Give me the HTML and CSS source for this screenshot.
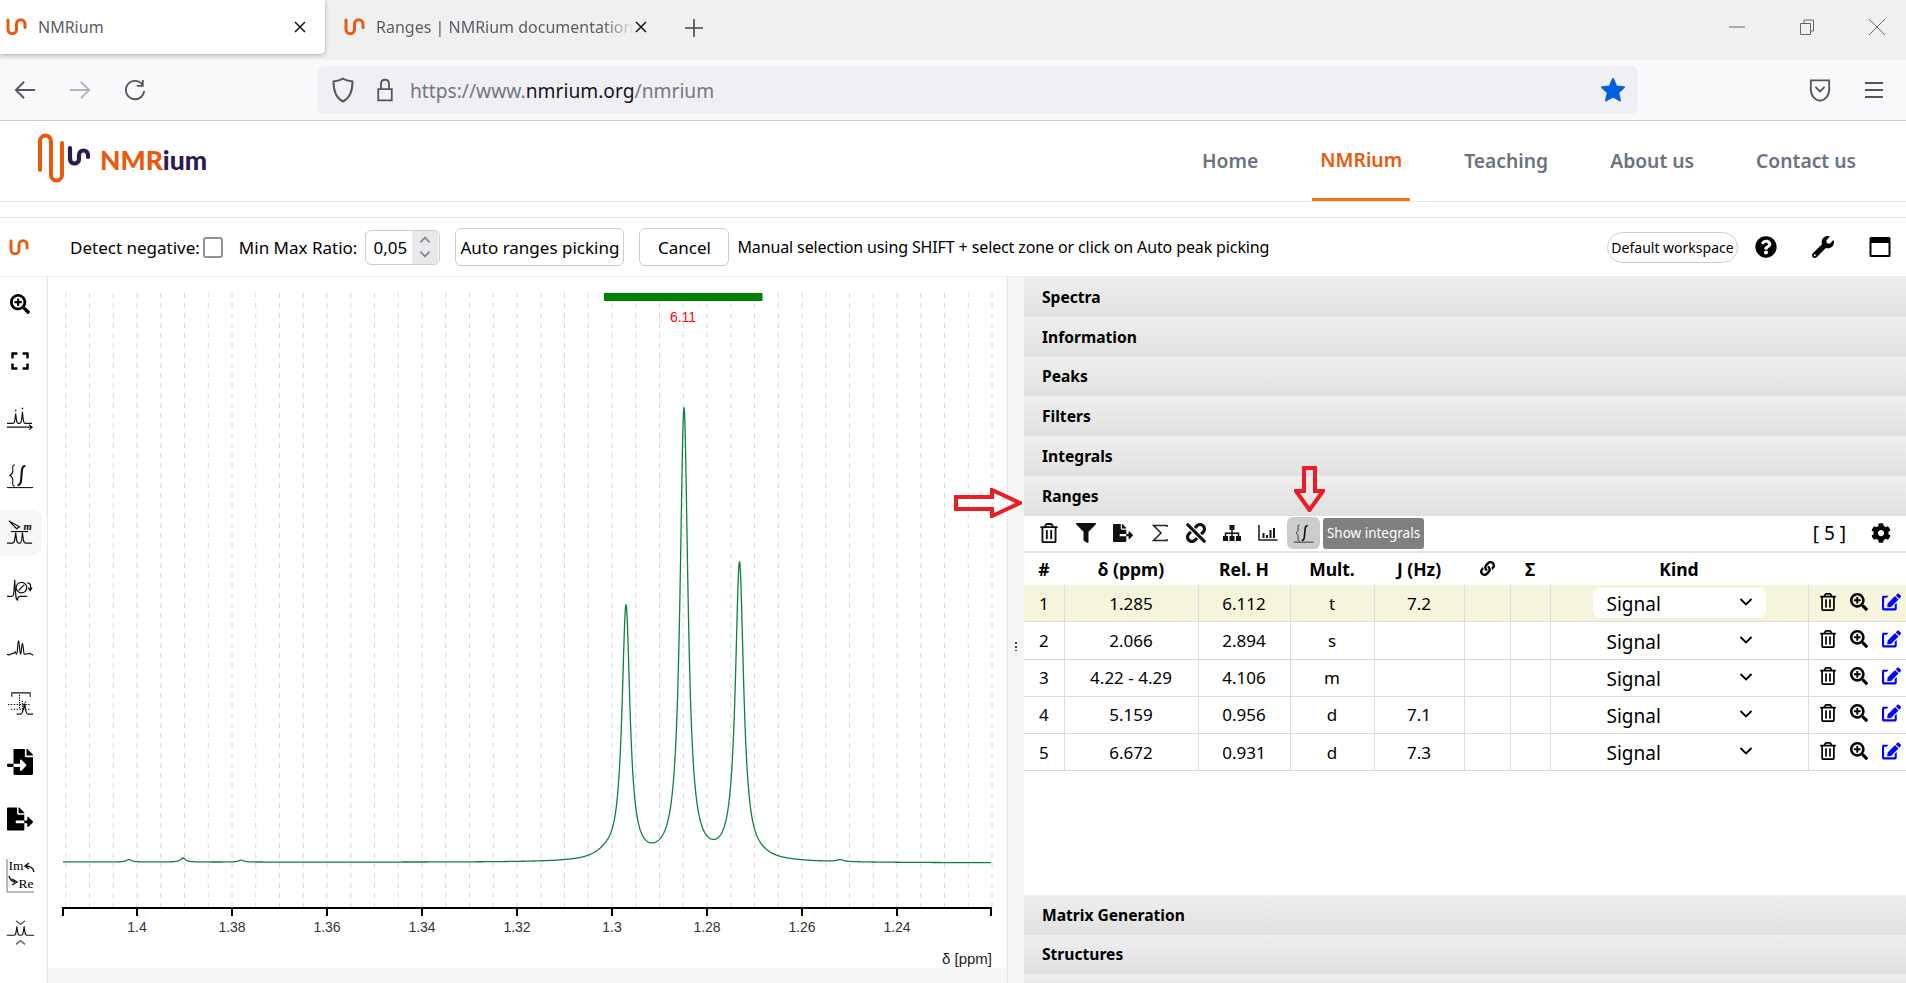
FILE: index.html
```html
<!DOCTYPE html>
<html lang="en">
<head>
<meta charset="utf-8">
<title>NMRium</title>
<link rel="stylesheet" href="styles.css">
</head>
<body>
<svg class="sprite" xmlns="http://www.w3.org/2000/svg">
  <symbol id="i-fav" viewBox="0 0 22 18"><path d="M2 2V11.500a4.250 4.250 0 0 0 8.500 0V6a4.250 4.250 0 0 1 8.500 0V9.500" fill="none" stroke="#ea5a0c" stroke-width="3" stroke-linecap="round"/></symbol>
  <symbol id="i-close" viewBox="0 0 14 14"><path d="M2 2L12 12M12 2L2 12" fill="none" stroke="currentColor" stroke-width="1.500"/></symbol>
  <symbol id="i-zoom" viewBox="0 0 512 512"><path d="M304 192v32c0 6.600-5.400 12-12 12h-56v56c0 6.600-5.400 12-12 12h-32c-6.600 0-12-5.400-12-12v-56h-56c-6.600 0-12-5.400-12-12v-32c0-6.600 5.400-12 12-12h56v-56c0-6.600 5.400-12 12-12h32c6.600 0 12 5.400 12 12v56h56c6.600 0 12 5.400 12 12zm201 284.700L476.700 505c-9.400 9.400-24.600 9.400-33.900 0L343 405.300c-4.500-4.500-7-10.600-7-17V372c-35.300 27.600-79.700 44-128 44C93.100 416 0 322.900 0 208S93.100 0 208 0s208 93.100 208 208c0 48.300-16.400 92.700-44 128h16.300c6.400 0 12.500 2.500 17 7l99.700 99.700c9.300 9.400 9.300 24.600 0 34zM344 208c0-75.200-60.800-136-136-136S72 132.800 72 208s60.800 136 136 136 136-60.800 136-136z"/></symbol>
  <symbol id="i-expand" viewBox="0 0 448 512"><path d="M0 180V56c0-13.300 10.700-24 24-24h124c6.600 0 12 5.400 12 12v40c0 6.600-5.400 12-12 12H64v84c0 6.600-5.400 12-12 12H12c-6.600 0-12-5.400-12-12zM288 44v40c0 6.600 5.400 12 12 12h84v84c0 6.600 5.400 12 12 12h40c6.600 0 12-5.400 12-12V56c0-13.300-10.700-24-24-24H300c-6.600 0-12 5.400-12 12zm148 276h-40c-6.600 0-12 5.400-12 12v84h-84c-6.600 0-12 5.400-12 12v40c0 6.600 5.400 12 12 12h124c13.300 0 24-10.700 24-24V332c0-6.600-5.400-12-12-12zM160 468v-40c0-6.600-5.400-12-12-12H64v-84c0-6.600-5.400-12-12-12H12c-6.600 0-12 5.400-12 12v124c0 13.300 10.700 24 24 24h124c6.600 0 12-5.400 12-12z"/></symbol>
  <symbol id="i-trash" viewBox="0 0 448 512"><path d="M268 416h24a12 12 0 0 0 12-12V188a12 12 0 0 0-12-12h-24a12 12 0 0 0-12 12v216a12 12 0 0 0 12 12zM432 80h-82.410l-34-56.700A48 48 0 0 0 274.410 0H173.590a48 48 0 0 0-41.160 23.300L98.410 80H16A16 16 0 0 0 0 96v16a16 16 0 0 0 16 16h16v336a48 48 0 0 0 48 48h288a48 48 0 0 0 48-48V128h16a16 16 0 0 0 16-16V96a16 16 0 0 0-16-16zM171.840 50.910A6 6 0 0 1 177 48h94a6 6 0 0 1 5.150 2.910L293.610 80H154.390zM368 464H80V128h288zm-212-48h24a12 12 0 0 0 12-12V188a12 12 0 0 0-12-12h-24a12 12 0 0 0-12 12v216a12 12 0 0 0 12 12z"/></symbol>
  <symbol id="i-filter" viewBox="0 0 512 512"><path d="M487.976 0H24.028C2.710 0-8.047 25.866 7.058 40.971L192 225.941V432c0 7.831 3.821 15.170 10.237 19.662l80 55.980C298.020 518.690 320 507.493 320 487.980V225.941l184.947-184.970C520.021 25.896 509.338 0 487.976 0z"/></symbol>
  <symbol id="i-export" viewBox="0 0 576 512"><path d="M384 121.900c0-6.300-2.500-12.400-7-16.900L279.100 7c-4.500-4.500-10.600-7-17-7H256v128h128zM571 308l-95.700-96.400c-10.100-10.100-27.400-3-27.400 11.300V288h-64v64h64v65.200c0 14.300 17.300 21.400 27.400 11.300L571 332c6.600-6.600 6.600-17.400 0-24zm-379 28v-32c0-8.800 7.200-16 16-16h176V160H248c-13.200 0-24-10.800-24-24V0H24C10.700 0 0 10.700 0 24v464c0 13.300 10.700 24 24 24h336c13.300 0 24-10.700 24-24V352H208c-8.800 0-16-7.200-16-16z"/></symbol>
  <symbol id="i-import" viewBox="0 0 512 512"><path d="M16 288c-8.800 0-16 7.200-16 16v32c0 8.800 7.200 16 16 16h112v-64zm489-183L407.100 7c-4.500-4.500-10.600-7-17-7H384v128h128v-6.100c0-6.300-2.500-12.400-7-16.900zm-153 31V0H152c-13.300 0-24 10.700-24 24v264h128v-65.200c0-14.300 17.300-21.400 27.400-11.300L379 308c6.600 6.700 6.600 17.400 0 24l-95.700 96.400c-10.100 10.100-27.400 3-27.400-11.300V352H128v136c0 13.300 10.700 24 24 24h336c13.300 0 24-10.700 24-24V160H376c-13.200 0-24-10.800-24-24z"/></symbol>
  <symbol id="i-unlink" viewBox="0 0 512 512"><path d="M304.083 405.907c4.686 4.686 4.686 12.284 0 16.971l-44.674 44.674c-59.263 59.262-155.693 59.266-214.961 0-59.264-59.265-59.264-155.696 0-214.960l44.675-44.675c4.686-4.686 12.284-4.686 16.971 0l39.598 39.598c4.686 4.686 4.686 12.284 0 16.971l-44.675 44.674c-28.072 28.073-28.072 73.750 0 101.823 28.072 28.072 73.750 28.073 101.824 0l44.674-44.674c4.686-4.686 12.284-4.686 16.971 0l39.597 39.598zm-56.568-260.216c4.686 4.686 12.284 4.686 16.971 0l44.674-44.674c28.072-28.075 73.750-28.073 101.824 0 28.072 28.073 28.072 73.750 0 101.823l-44.675 44.674c-4.686 4.686-4.686 12.284 0 16.971l39.598 39.598c4.686 4.686 12.284 4.686 16.971 0l44.675-44.675c59.265-59.265 59.265-155.695 0-214.960-59.266-59.264-155.695-59.264-214.961 0l-44.674 44.674c-4.686 4.686-4.686 12.284 0 16.971l39.597 39.598zm234.828 359.280l22.627-22.627c9.373-9.373 9.373-24.569 0-33.941L63.598 7.029c-9.373-9.373-24.569-9.373-33.941 0L7.029 29.657c-9.373 9.373-9.373 24.569 0 33.941l441.373 441.373c9.373 9.372 24.569 9.372 33.941 0z"/></symbol>
  <symbol id="i-link" viewBox="0 0 512 512"><path d="M326.612 185.391c59.747 59.809 58.927 155.698.36 214.590-.11.12-.24.25-.36.37l-67.2 67.2c-59.270 59.270-155.699 59.262-214.960 0-59.270-59.260-59.270-155.700 0-214.960l37.106-37.106c9.840-9.840 26.786-3.300 27.294 10.606.648 17.722 3.826 35.527 9.690 52.721 1.986 5.822.567 12.262-3.783 16.612l-13.087 13.087c-28.026 28.026-28.905 73.660-1.155 101.960 28.024 28.579 74.086 28.749 102.325.51l67.2-67.190c28.191-28.191 28.073-73.757 0-101.830-3.701-3.694-7.429-6.564-10.341-8.569a16.037 16.037 0 0 1-6.947-12.606c-.396-10.567 3.348-21.456 11.698-29.806l21.054-21.055c5.521-5.521 14.182-6.199 20.584-1.731a152.482 152.482 0 0 1 20.522 17.197zM467.547 44.449c-59.261-59.262-155.690-59.270-214.960 0l-67.2 67.2c-.12.12-.25.25-.36.37-58.566 58.892-59.387 154.781.36 214.590a152.454 152.454 0 0 0 20.521 17.196c6.402 4.468 15.064 3.789 20.584-1.731l21.054-21.055c8.350-8.350 12.094-19.239 11.698-29.806a16.037 16.037 0 0 0-6.947-12.606c-2.912-2.005-6.640-4.875-10.341-8.569-28.073-28.073-28.191-73.639 0-101.830l67.2-67.190c28.239-28.239 74.300-28.069 102.325.51 27.750 28.300 26.872 73.934-1.155 101.960l-13.087 13.087c-4.350 4.350-5.769 10.790-3.783 16.612 5.864 17.194 9.042 34.999 9.690 52.721.509 13.906 17.454 20.446 27.294 10.606l37.106-37.106c59.271-59.259 59.271-155.699.001-214.959z"/></symbol>
  <symbol id="i-edit" viewBox="0 0 576 512"><path d="M402.600 83.200l90.200 90.200c3.800 3.800 3.800 10 0 13.800L274.400 405.600l-92.800 10.300c-12.400 1.400-22.900-9.100-21.500-21.500l10.300-92.800L388.800 83.200c3.800-3.800 10-3.800 13.800 0zm162-22.900l-48.800-48.800c-15.200-15.200-39.900-15.200-55.200 0l-35.400 35.400c-3.800 3.800-3.800 10 0 13.800l90.200 90.200c3.800 3.800 10 3.800 13.800 0l35.400-35.400c15.200-15.300 15.200-40 0-55.200zM384 346.200V448H64V128h73.100c3.200 0 6.200-1.300 8.500-3.500l40-40c7.600-7.600 2.200-20.500-8.500-20.500H48C21.500 64 0 85.500 0 112v352c0 26.500 21.500 48 48 48h352c26.500 0 48-21.500 48-48V306.200c0-10.700-12.900-16-20.500-8.500l-40 40c-2.200 2.300-3.500 5.300-3.500 8.500z"/></symbol>
  <symbol id="i-integral" viewBox="0 0 30 30"><g fill="none" stroke="#111"><path d="M9 4C6 4 7 7 7 10C7 13 6 14 4 15C6 16 7 17 7 20C7 23 6 26 9 26" stroke-width="1.100"/><path d="M12 25C15 25 15.500 23 16 15C16.500 7 17 5 20 5" stroke-width="2.200"/><path d="M1 27.500H28" stroke-width="1.100"/></g></symbol>
  <symbol id="i-chev" viewBox="0 0 14 10"><path d="M1.500 2L7 7.500L12.500 2" fill="none" stroke="currentColor" stroke-width="1.800"/></symbol>
</svg>

<header class="chrome">
  <div class="tabstrip">
    <div class="tab tab-active">
      <svg class="fav"><use href="#i-fav"/></svg>
      <span class="tab-title">NMRium</span>
      <svg class="tab-close"><use href="#i-close"/></svg>
    </div>
    <div class="tab tab-other">
      <svg class="fav"><use href="#i-fav"/></svg>
      <span class="tab-title tab-fade">Ranges | NMRium documentation</span>
      <svg class="tab-close"><use href="#i-close"/></svg>
    </div>
    <svg class="newtab" viewBox="0 0 20 20"><path d="M10 1V19M1 10H19" stroke="#444" stroke-width="1.600"/></svg>
    <div class="winctl">
      <svg viewBox="0 0 16 16"><path d="M0 8H16" stroke="#666" stroke-width="1"/></svg>
      <svg viewBox="0 0 16 16"><path d="M1.500 4.500H11.500V15.500H1.500ZM5 4.500V1H14.500V12H11.500" fill="none" stroke="#666" stroke-width="1"/></svg>
      <svg viewBox="0 0 16 16"><path d="M0 0L16 16M16 0L0 16" stroke="#666" stroke-width="1"/></svg>
    </div>
  </div>
  <div class="navbar">
    <svg class="nav-ico nav-back" viewBox="0 0 24 24"><path d="M23 12H2M11 3L2 12L11 21" fill="none" stroke="#55555f" stroke-width="2"/></svg>
    <svg class="nav-ico nav-fwd" viewBox="0 0 24 24"><path d="M1 12H22M13 3L22 12L13 21" fill="none" stroke="#b4b4ba" stroke-width="2"/></svg>
    <svg class="nav-ico nav-reload" viewBox="0 0 24 24"><path d="M20 6A10 10 0 1 0 22 13M20.500 1V7.500H14" fill="none" stroke="#55555f" stroke-width="2"/></svg>
    <div class="urlbar">
      <svg class="url-shield" viewBox="0 0 22 26"><path d="M11 1.500C14 3.500 17 4 20.500 4.500C20.500 14 18 21 11 24.500C4 21 1.500 14 1.500 4.500C5 4 8 3.500 11 1.500Z" fill="none" stroke="#55555f" stroke-width="2"/></svg>
      <svg class="url-lock" viewBox="0 0 20 26"><path d="M2.500 12H17.500V24.500H2.500ZM5.500 12V6.500C5.500 0 14.500 0 14.500 6.500V12" fill="none" stroke="#55555f" stroke-width="2"/></svg>
      <span class="url-text">https://www.<b class="url-domain">nmrium.org</b>/nmrium</span>
      <svg class="url-star" viewBox="0 0 26 26"><path d="M13 2L16.200 9.500L24 10.300L18.200 15.600L20 23.500L13 19.300L6 23.500L7.800 15.600L2 10.300L9.800 9.500Z" fill="#0060df" stroke="#0060df" stroke-width="2" stroke-linejoin="round"/></svg>
    </div>
    <svg class="nav-ico nav-pocket" viewBox="0 0 24 26"><path d="M2 2H22V12C22 19 17 24 12 24C7 24 2 19 2 12ZM7 9L12 14L17 9" fill="none" stroke="#55555f" stroke-width="2"/></svg>
    <svg class="nav-ico nav-menu" viewBox="0 0 20 20"><path d="M1 3H19M1 10H19M1 17H19" stroke="#55555f" stroke-width="2"/></svg>
  </div>
</header>

<div class="sitehead">
  <div class="logo">
    <svg class="logo-mark" viewBox="0 0 56 50">
      <path d="M2 37V8a5.500 5.500 0 0 1 11 0V42a5.500 5.500 0 0 0 11 0V10" fill="none" stroke="#ea5a0c" stroke-width="4" stroke-linecap="round"/>
      <path d="M32 15V26a4.500 4.500 0 0 0 9 0V22a4.500 4.500 0 0 1 9 0V24" fill="none" stroke="#2d1b4e" stroke-width="4.200" stroke-linecap="round"/>
    </svg>
    <span class="logo-text"><span class="logo-nmr">NMR</span>ium</span>
  </div>
  <nav class="sitenav">
    <a class="navlink">Home</a>
    <a class="navlink navlink-on">NMRium</a>
    <a class="navlink">Teaching</a>
    <a class="navlink">About us</a>
    <a class="navlink">Contact us</a>
  </nav>
</div>
<div class="headgap"></div>

<div class="toolbar">
  <svg class="tb-logo"><use href="#i-fav"/></svg>
  <label class="tb-label tb-detect">Detect negative:</label>
  <input class="tb-check" type="checkbox">
  <span class="tb-label tb-ratio">Min Max Ratio:</span>
  <div class="spin"><span class="spin-val">0,05</span>
    <span class="spin-btn"><svg viewBox="0 0 12 24"><path d="M2 8L6 4L10 8M2 16L6 20L10 16" fill="none" stroke="#888" stroke-width="1.600"/></svg></span>
  </div>
  <button class="tb-btn tb-auto">Auto ranges picking</button>
  <button class="tb-btn tb-cancel">Cancel</button>
  <span class="tb-label tb-hint">Manual selection using SHIFT + select zone or click on Auto peak picking</span>
  <button class="tb-workspace">Default workspace</button>
  <svg class="tb-ico tb-help" viewBox="0 0 512 512"><path d="M504 256c0 136.997-111.043 248-248 248S8 392.997 8 256C8 119.083 119.043 8 256 8s248 111.083 248 248zM262.655 90c-54.497 0-89.255 22.957-116.549 63.758-3.536 5.286-2.353 12.415 2.715 16.258l34.699 26.310c5.205 3.947 12.621 3.008 16.665-2.122 17.864-22.658 30.113-35.797 57.303-35.797 20.429 0 45.698 13.148 45.698 32.958 0 14.976-12.363 22.667-32.534 33.976C247.128 238.528 216 254.941 216 296v4c0 6.627 5.373 12 12 12h56c6.627 0 12-5.373 12-12v-1.333c0-28.462 83.186-29.647 83.186-106.667 0-58.002-60.165-102-116.531-102zM256 338c-25.365 0-46 20.635-46 46 0 25.364 20.635 46 46 46s46-20.636 46-46c0-25.365-20.635-46-46-46z"/></svg>
  <svg class="tb-ico tb-wrench" viewBox="0 0 512 512"><path d="M507.730 109.100c-2.240-9.030-13.540-12.090-20.120-5.510l-74.360 74.360-67.880-11.310-11.310-67.880 74.360-74.360c6.620-6.620 3.430-17.900-5.660-20.160-47.380-11.740-99.550.91-136.580 37.930-39.640 39.640-50.550 97.100-34.050 147.200L18.740 402.760c-24.990 24.990-24.990 65.510 0 90.500 24.990 24.990 65.510 24.990 90.500 0l213.210-213.210c50.120 16.710 107.470 5.680 147.370-34.220 37.070-37.070 49.700-89.320 37.910-136.730zM64 472c-13.250 0-24-10.750-24-24 0-13.260 10.750-24 24-24s24 10.740 24 24c0 13.250-10.750 24-24 24z"/></svg>
  <svg class="tb-ico tb-window" viewBox="0 0 22 22"><path d="M2 1H20A1.500 1.500 0 0 1 21.500 2.500V19.500A1.500 1.500 0 0 1 20 21H2A1.500 1.500 0 0 1 .5 19.500V2.500A1.500 1.500 0 0 1 2 1ZM2.500 7V19H19.500V7Z" fill-rule="evenodd"/></svg>
</div>

<main class="workspace">
  <aside class="sidebar">
    <div class="sb-item"><svg class="sb-fa"><use href="#i-zoom"/></svg></div>
    <div class="sb-item"><svg class="sb-fa"><use href="#i-expand"/></svg></div>
    <div class="sb-item"><svg class="sb-ico" viewBox="0 0 30 30"><g fill="none" stroke="#111" stroke-width="1.200"><path d="M1 20H7C9 20 9 18 10 10C11 18 11 20 12.500 20H14C16 20 16 18 17 8C18 18 18 20 20 20H27"/><path d="M10 6V7.500M17 4V5.500" stroke-width="1.500"/><path d="M1 24H27M24 21.500L27 24L24 26.500"/></g></svg></div>
    <div class="sb-item"><svg class="sb-ico"><use href="#i-integral"/></svg></div>
    <div class="sb-item sb-on"><svg class="sb-ico" viewBox="0 0 30 30"><g fill="none" stroke="#111" stroke-width="1.200"><path d="M1 25H7C9 25 9 22 10 14C11 22 11 25 13 25H14.500C16 25 16.500 22 17 14C18 22 18 25 20 25H27"/><path d="M5 13H23"/><path d="M3 2L14 8L11 10Z" fill="none"/></g><text class="sb-m" x="18" y="11">m</text></svg></div>
    <div class="sb-item"><svg class="sb-ico" viewBox="0 0 30 30"><g fill="none" stroke="#111" stroke-width="1.200"><path d="M1 21H6C8 21 8 20 9 4C10 20 10 25 12 25C12 22 13 21 15 21H22"/><circle cx="16" cy="12" r="5.500" stroke-width="1.300"/><path d="M13 15L19 9"/><path d="M22 7C26 7 26 11 25 14M23 12L25 15L27 12" stroke-width="1.300"/></g></svg></div>
    <div class="sb-item"><svg class="sb-ico" viewBox="0 0 30 30"><path d="M1 22C4 24 5 21 7 21C8 21 8 22 9 20C10 18 10 22 11 22C12 22 12 8 13 8C14 8 14 22 15 22C16 22 16 11 17 11C18 11 18 22 19 22C21 22 23 21 25 21C26 22 27 22 28 23" fill="none" stroke="#111" stroke-width="1.200"/></svg></div>
    <div class="sb-item"><svg class="sb-ico" viewBox="0 0 30 30"><g fill="none" stroke="#111" stroke-width="1.100"><path d="M6 7V3H25V7"/><path d="M2 15H26M5 20H26" stroke-dasharray="1.500 1.500"/><path d="M11 25H15C17 25 18 22 19 14C20 22 21 25 23 25H28" stroke-width="1.300"/><path d="M14 5V20M17 11V22M20 12V22" stroke-dasharray="1.500 1"/></g></svg></div>
    <div class="sb-item"><svg class="sb-fa sb-file"><use href="#i-import"/></svg></div>
    <div class="sb-item"><svg class="sb-fa sb-file"><use href="#i-export"/></svg></div>
    <div class="sb-item"><svg class="sb-imre" viewBox="0 0 29 35"><path d="M1 1V34H28" fill="none" stroke="#777" stroke-width="1"/><text class="sb-serif" x="2.500" y="12">Im</text><text class="sb-serif" x="12.500" y="30">Re</text><path d="M28 14C27 9 24 8 20 8M23 5L19 8L23 11M3 18C4 22 7 24 9 24M6 21L11 24L6 27" fill="none" stroke="#111" stroke-width="1.400"/></svg></div>
    <div class="sb-item"><svg class="sb-ico" viewBox="0 0 32 32"><path d="M1 18H9C11 18 11 16 12 8C13 16 13 18 16 18C19 18 19 16 20 8C21 16 21 18 23 18H31" fill="none" stroke="#111" stroke-width="1.200"/><path d="M11 2L16 6L21 2M11 28L16 24L21 28" fill="none" stroke="#666" stroke-width="1.600"/></svg></div>
  </aside>

  <section class="plot">
    <svg class="chart" id="chart" viewBox="48 276 959 691" width="959" height="691">
      <g id="grid" class="grid"></g>
      <rect class="range-bar" x="604" y="292" width="158.500" height="8"/>
      <text class="range-label" x="683" y="321">6.11</text>
      <path id="spectrum" class="spectrum"/>
      <path class="axis" d="M63 915V907H991V915M137 907V915M232 907V915M327 907V915M422 907V915M517 907V915M612 907V915M707 907V915M802 907V915M897 907V915"/>
      <text class="tick" x="137" y="931">1.4</text>
      <text class="tick" x="232" y="931">1.38</text>
      <text class="tick" x="327" y="931">1.36</text>
      <text class="tick" x="422" y="931">1.34</text>
      <text class="tick" x="517" y="931">1.32</text>
      <text class="tick" x="612" y="931">1.3</text>
      <text class="tick" x="707" y="931">1.28</text>
      <text class="tick" x="802" y="931">1.26</text>
      <text class="tick" x="897" y="931">1.24</text>
      <text class="axis-title" x="992" y="963">δ [ppm]</text>
    </svg>
  </section>

  <div class="splitter"><span class="grip"></span></div>

  <section class="panels">
    <div class="acc">Spectra</div>
    <div class="acc">Information</div>
    <div class="acc">Peaks</div>
    <div class="acc">Filters</div>
    <div class="acc">Integrals</div>
    <div class="acc">Ranges</div>
    <div class="ranges">
      <div class="rg-tools">
        <svg class="rg-ico"><use href="#i-trash"/></svg>
        <svg class="rg-ico"><use href="#i-filter"/></svg>
        <svg class="rg-ico"><use href="#i-export"/></svg>
        <svg class="rg-ico" viewBox="0 0 20 20"><path d="M17 4V2.500H3.500L11 10L3.500 17.500H17V16" fill="none" stroke="#222" stroke-width="1.500"/></svg>
        <svg class="rg-ico"><use href="#i-unlink"/></svg>
        <svg class="rg-ico" viewBox="0 0 20 20"><path d="M7.500 2H12.500V7H7.500ZM1 13H6V18H1ZM7.500 13H12.500V18H7.500ZM14 13H19V18H14ZM9.250 7H10.750V9.500H17.250V13H15.750V11H10.750V13H9.250V11H4.250V13H2.750V9.500H9.250Z"/></svg>
        <svg class="rg-ico" viewBox="0 0 20 20"><path d="M1 2V17H19.500" fill="none" stroke="#222" stroke-width="1.600"/><path d="M4.500 10H6.500V15H4.500ZM8 12H10V15H8ZM11.500 7H13.500V15H11.500ZM15 5H17V15H15Z"/></svg>
        <span class="rg-toggle"><svg class="rg-int"><use href="#i-integral"/></svg></span>
        <span class="tooltip">Show integrals</span>
        <span class="rg-count">[ 5 ]</span>
        <svg class="rg-cog" viewBox="0 0 512 512"><path d="M487.400 315.700l-42.600-24.600c4.300-23.200 4.300-47 0-70.200l42.600-24.600c4.900-2.800 7.100-8.600 5.500-14-11.100-35.600-30-67.800-54.700-94.600-3.800-4.100-10-5.100-14.800-2.300L380.800 110c-17.900-15.400-38.500-27.300-60.800-35.100V25.800c0-5.600-3.900-10.500-9.400-11.700-36.700-8.200-74.300-7.800-109.200 0-5.500 1.200-9.400 6.100-9.400 11.700V75c-22.200 7.900-42.800 19.800-60.800 35.100L88.700 85.500c-4.900-2.800-11-1.900-14.800 2.300-24.700 26.700-43.600 58.900-54.700 94.600-1.700 5.400.6 11.200 5.500 14L67.300 221c-4.300 23.200-4.300 47 0 70.200l-42.600 24.600c-4.900 2.800-7.100 8.600-5.500 14 11.100 35.600 30 67.800 54.700 94.600 3.800 4.100 10 5.100 14.800 2.300l42.600-24.600c17.900 15.400 38.500 27.300 60.800 35.100v49.200c0 5.600 3.900 10.500 9.400 11.700 36.700 8.200 74.300 7.800 109.200 0 5.500-1.200 9.400-6.100 9.400-11.700v-49.200c22.200-7.900 42.800-19.800 60.800-35.100l42.600 24.600c4.900 2.800 11 1.900 14.800-2.300 24.700-26.700 43.600-58.900 54.700-94.600 1.500-5.500-.7-11.300-5.600-14.100zM256 336c-44.100 0-80-35.900-80-80s35.900-80 80-80 80 35.900 80 80-35.900 80-80 80z"/></svg>
      </div>
      <table class="rg-table">
        <colgroup>
          <col class="c-num"><col class="c-ppm"><col class="c-rel"><col class="c-mult"><col class="c-j"><col class="c-link"><col class="c-sig"><col class="c-kind"><col class="c-act">
        </colgroup>
        <thead>
          <tr><th>#</th><th>δ (ppm)</th><th>Rel. H</th><th>Mult.</th><th>J (Hz)</th><th><svg class="th-link"><use href="#i-link"/></svg></th><th>Σ</th><th>Kind</th><th></th></tr>
        </thead>
        <tbody>
          <tr class="row-on"><td>1</td><td>1.285</td><td>6.112</td><td>t</td><td>7.2</td><td></td><td></td><td><div class="kind kind-on"><span>Signal</span><svg class="chev"><use href="#i-chev"/></svg></div></td><td><div class="acts"><svg class="act"><use href="#i-trash"/></svg><svg class="act"><use href="#i-zoom"/></svg><svg class="act act-edit"><use href="#i-edit"/></svg></div></td></tr>
          <tr><td>2</td><td>2.066</td><td>2.894</td><td>s</td><td></td><td></td><td></td><td><div class="kind"><span>Signal</span><svg class="chev"><use href="#i-chev"/></svg></div></td><td><div class="acts"><svg class="act"><use href="#i-trash"/></svg><svg class="act"><use href="#i-zoom"/></svg><svg class="act act-edit"><use href="#i-edit"/></svg></div></td></tr>
          <tr><td>3</td><td>4.22 - 4.29</td><td>4.106</td><td>m</td><td></td><td></td><td></td><td><div class="kind"><span>Signal</span><svg class="chev"><use href="#i-chev"/></svg></div></td><td><div class="acts"><svg class="act"><use href="#i-trash"/></svg><svg class="act"><use href="#i-zoom"/></svg><svg class="act act-edit"><use href="#i-edit"/></svg></div></td></tr>
          <tr><td>4</td><td>5.159</td><td>0.956</td><td>d</td><td>7.1</td><td></td><td></td><td><div class="kind"><span>Signal</span><svg class="chev"><use href="#i-chev"/></svg></div></td><td><div class="acts"><svg class="act"><use href="#i-trash"/></svg><svg class="act"><use href="#i-zoom"/></svg><svg class="act act-edit"><use href="#i-edit"/></svg></div></td></tr>
          <tr><td>5</td><td>6.672</td><td>0.931</td><td>d</td><td>7.3</td><td></td><td></td><td><div class="kind"><span>Signal</span><svg class="chev"><use href="#i-chev"/></svg></div></td><td><div class="acts"><svg class="act"><use href="#i-trash"/></svg><svg class="act"><use href="#i-zoom"/></svg><svg class="act act-edit"><use href="#i-edit"/></svg></div></td></tr>
        </tbody>
      </table>
    </div>
    <div class="acc">Matrix Generation</div>
    <div class="acc">Structures</div>
    <div class="acc"></div>
  </section>

  <svg class="arrow arrow-right" viewBox="0 0 68 30"><path d="M2 9H38V2L66 15L38 28V21H2Z" fill="none" stroke="#ed1c24" stroke-width="4"/></svg>
  <svg class="arrow arrow-down" viewBox="0 0 31 46"><path d="M10 2H21V25H29L15.500 44L2 25H10Z" fill="none" stroke="#ed1c24" stroke-width="4"/></svg>
</main>
<script src="script.js"></script>
</body>
</html>
```

FILE: styles.css
```css
* { box-sizing: border-box; }
html, body { margin: 0; height: 983px; overflow: hidden; }
body { position: relative; width: 1906px; background: #fff; color: #000; font-family: "Noto Sans", "Liberation Sans", sans-serif; font-size: 16px; }
svg { display: block; flex: none; fill: currentColor; }
.sprite { display: none; }

/* browser chrome */
.chrome { height: 121px; border-bottom: 1px solid #ccc; }
.tabstrip { height: 60px; background: #f0f0f0; display: flex; align-items: flex-start; position: relative; }
.tab { height: 54px; display: flex; align-items: center; font-size: 16px; color: #5b5b66; }
.tab-active { width: 325px; background: #fff; border-radius: 0 0 5px 0; box-shadow: 0 1px 4px rgba(0,0,0,.3); padding: 0 18px 0 6px; }
.tab-other { width: 320px; margin-left: 12px; padding: 0 9px 0 7px; }
.fav { width: 22px; height: 18px; }
.tab-title { flex: 1; margin-left: 10px; white-space: nowrap; overflow: hidden; }
.tab-fade { -webkit-mask-image: linear-gradient(to right, #000 88%, transparent); mask-image: linear-gradient(to right, #000 88%, transparent); }
.tab-close { width: 14px; height: 14px; color: #15141a; }
.newtab { width: 20px; height: 20px; margin: 18px 0 0 27px; }
.winctl { margin-left: auto; display: flex; gap: 54px; padding: 19px 21px 0 0; }
.winctl svg { width: 16px; height: 16px; }
.navbar { height: 60px; background: #f9f9fb; display: flex; align-items: center; padding: 0 22px 0 14px; }
.nav-ico { width: 22px; height: 22px; }
.nav-fwd { margin-left: 33px; }
.nav-reload { margin-left: 33px; }
.urlbar { width: 1320px; height: 48px; margin-left: 172px; background: #f0f0f4; border-radius: 6px; display: flex; align-items: center; padding: 0 12px 0 14px; }
.url-shield { width: 22px; height: 26px; }
.url-lock { width: 18px; height: 24px; margin-left: 22px; }
.url-text { margin-left: 16px; font-size: 19.200px; color: #76767f; white-space: nowrap; }
.url-domain { font-weight: 400; color: #15141a; }
.url-star { width: 26px; height: 26px; margin-left: auto; }
.nav-pocket { margin-left: auto; width: 22px; height: 25px; }
.nav-menu { width: 20px; height: 20px; margin-left: 33px; }

/* site header */
.sitehead { height: 81px; border-bottom: 1px solid #e5e7eb; display: flex; justify-content: space-between; padding-left: 38px; }
.logo { display: flex; align-items: center; height: 74px; }
.logo-mark { width: 56px; height: 50px; }
.logo-text { margin-left: 6px; font-family: Lato, sans-serif; font-weight: 900; font-size: 26.500px; color: #2d1b4e; padding-top: 4px; }
.logo-nmr { color: #ea5a0c; }
.sitenav { display: flex; gap: 46px; padding-right: 42px; }
.navlink { display: flex; align-items: center; height: 80px; padding: 0 8px; font-size: 19.300px; font-weight: 600; color: #6b7280; border-bottom: 2px solid transparent; }
.navlink-on { color: #ea580c; border-bottom: 3px solid #f97316; }
.headgap { height: 16px; border-bottom: 1px solid #e5e5e5; }

/* toolbar */
.toolbar { height: 58px; display: flex; align-items: center; padding: 0 15px 0 9px; font-size: 17px; }
.tb-logo { width: 21px; height: 17px; }
.tb-label { white-space: nowrap; }
.tb-detect { margin-left: 40px; }
.tb-check { appearance: none; width: 20px; height: 21px; margin: 0 0 0 3px; border: 2px solid #8f8f9d; border-radius: 3px; background: #fff; }
.tb-ratio { margin-left: 16px; }
.spin { width: 75px; height: 35px; margin-left: 8px; border: 1px solid #ccc; border-radius: 6px; display: flex; align-items: center; justify-content: space-between; padding-left: 7px; overflow: hidden; }
.spin-btn { width: 26px; height: 100%; background: #e9e9ed; display: flex; align-items: center; justify-content: center; margin-right: 1px; }
.spin-btn svg { width: 14px; height: 28px; }
.tb-btn { height: 38px; padding: 0; background: #fff; border: 1px solid #ccc; border-radius: 6px; font: inherit; color: #000; }
.tb-auto { width: 169px; margin-left: 15px; }
.tb-cancel { width: 90px; margin-left: 15px; }
.tb-hint { margin-left: 8px; font-size: 16px; letter-spacing: -0.120px; }
.tb-workspace { width: 131px; height: 31px; margin-left: auto; padding: 0; background: #fff; border: 1px solid #ccc; border-radius: 16px; font: inherit; font-size: 14px; white-space: nowrap; color: #000; }
.tb-ico { width: 22px; height: 22px; }
.tb-help { margin-left: 17px; }
.tb-wrench { margin-left: 35px; }
.tb-window { margin-left: 35px; }

/* main area */
.workspace { height: 708px; display: flex; position: relative; border-top: 1px solid #eee; }
.sidebar { width: 48px; border-right: 1px solid #e5e5e5; display: flex; flex-direction: column; }
.sb-item { height: 57.200px; display: flex; align-items: center; justify-content: center; padding: 0 7px 3px 0; }
.sb-on { background: #f7f7f7; border-radius: 0 10px 10px 0; height: 46px; margin: 4.600px 5px 6.600px 0; padding: 0 2px 0 0; }
.sb-fa { width: 20px; height: 20px; }
.sb-file { width: 26px; height: 26px; }
.sb-ico { width: 29px; height: 29px; }
.sb-imre { width: 29px; height: 35px; }
.sb-m { font: italic 700 11px "Liberation Serif", serif; }
.sb-serif { font: 13.500px "Liberation Serif", serif; }
.plot { width: 959px; background: #f5f5f5; }
.chart { background: #fff; }
.grid line { stroke: #d8d8d8; stroke-width: 1; stroke-dasharray: 5 5; }
.range-bar { fill: #008000; }
.range-label { font: 14px "Liberation Sans", sans-serif; fill: #f00; text-anchor: middle; }
.spectrum { fill: none; stroke: #0f8040; stroke-width: 1.300; }
.axis { fill: none; stroke: #000; stroke-width: 2; }
.tick { font: 14px "Liberation Sans", sans-serif; fill: #333; text-anchor: middle; }
.axis-title { font: 15px "Liberation Sans", sans-serif; fill: #222; text-anchor: end; }
.splitter { width: 17px; background: #f5f5f5; border-left: 1px solid #e5e5e5; display: flex; justify-content: center; padding-top: 364px; }
.grip { width: 2px; height: 10px; background: radial-gradient(circle, #444 1px, transparent 1px) 0 0 / 2px 4px; }

/* accordion */
.panels { flex: 1; min-width: 0; display: flex; flex-direction: column; overflow: hidden; height: 707px; }
.acc { flex: none; height: 39.800px; display: flex; align-items: center; padding-left: 18px; background: linear-gradient(#efefef, #e0e0e0); font-weight: 700; font-size: 15.600px; }
.ranges { flex: none; height: 379px; display: flex; flex-direction: column; }
.rg-tools { height: 37px; display: flex; align-items: center; padding-left: 15px; border-bottom: 2px solid #e5e5e5; }
.rg-ico { width: 20px; height: 20px; margin-right: 17px; color: #111; }
.rg-ico:nth-of-type(n+4) { margin-right: 16px; }
.rg-toggle { width: 33px; height: 32px; background: #ccc; border-radius: 6px; display: flex; align-items: center; justify-content: center; margin-left: -7px; }
.rg-int { width: 22px; height: 22px; }
.tooltip { width: 101px; height: 31px; margin-left: 3px; background: #808080; color: #fff; border-radius: 3px; font-size: 13.500px; display: flex; align-items: center; justify-content: center; white-space: nowrap; }
.rg-count { margin-left: auto; font-size: 19px; white-space: nowrap; }
.rg-cog { width: 20px; height: 20px; margin: 0 15px 0 25px; }
.rg-table { width: 100%; table-layout: fixed; border-collapse: collapse; }
.c-num { width: 40px; } .c-ppm { width: 134px; } .c-rel { width: 92px; } .c-mult { width: 84px; }
.c-j { width: 90px; } .c-link { width: 46px; } .c-sig { width: 40px; } .c-kind { width: 258px; } .c-act { width: 98px; }
.rg-table th { height: 32px; padding: 0; font-size: 17.500px; font-weight: 700; text-align: center; }
.rg-table td { height: 37.200px; padding: 0; font-size: 17px; text-align: center; border: 1px solid #ddd; border-top: 0; }
.rg-table td:first-child { border-left: 0; }
.rg-table td:last-child { border-right: 0; }
.row-on td { background: #f5f5dc; }
.th-link { width: 15px; height: 15px; margin: 0 auto; }
.kind { width: 173px; height: 30px; margin: 0 auto; padding: 2px 13px 0 14px; display: flex; align-items: center; justify-content: space-between; border-radius: 8px; font-size: 19px; }
.kind-on { background: #fff; }
.chev { width: 14px; height: 10px; margin-top: -4px; }
.acts { display: flex; justify-content: space-between; align-items: center; padding: 0 5px 3px 10px; }
.act { width: 18px; height: 18px; }
.act-edit { width: 19px; color: #00f; }

/* annotation arrows */
.arrow { position: absolute; }
.arrow-right { left: 954px; top: 211px; width: 68px; height: 30px; }
.arrow-down { left: 1294px; top: 189px; width: 31px; height: 46px; }
```

FILE: script.js
```js
(function () {
  var NS = 'http://www.w3.org/2000/svg';
  var grid = document.getElementById('grid');
  for (var x = 137 - 3 * 23.75; x <= 992; x += 23.75) {
    var line = document.createElementNS(NS, 'line');
    line.setAttribute('x1', x);
    line.setAttribute('x2', x);
    line.setAttribute('y1', 292);
    line.setAttribute('y2', 906);
    grid.appendChild(line);
  }
  var peaks = [
    { x: 626, h: 253, w: 4.800 },
    { x: 684, h: 451, w: 4.800 },
    { x: 739.5, h: 297, w: 5 },
    { x: 606, h: 5, w: 14 },
    { x: 760, h: 2, w: 14 },
    { x: 129, h: 2.5, w: 3 },
    { x: 183, h: 4, w: 3 },
    { x: 241, h: 2, w: 3 },
    { x: 840, h: 2, w: 4 }
  ];
  var d = '';
  for (var px = 63; px <= 991; px += 0.5) {
    var y = 861 + (px - 63) / 928;
    peaks.forEach(function (p) {
      var t = (px - p.x) / p.w;
      y -= p.h / (1 + t * t);
    });
    d += (d ? 'L' : 'M') + px + ' ' + y.toFixed(2);
  }
  document.getElementById('spectrum').setAttribute('d', d);
})();
```
